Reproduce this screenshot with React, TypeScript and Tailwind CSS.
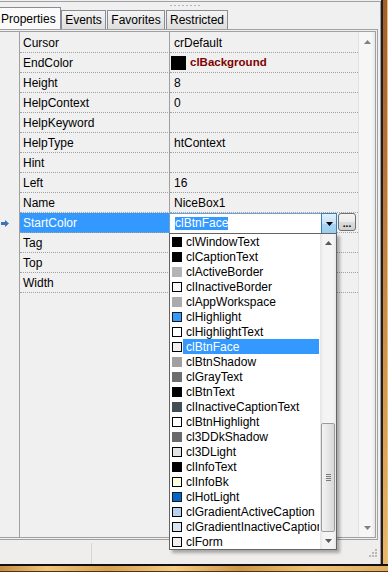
import React from 'react';

type Row = { n: string; v: string; color?: boolean; sel?: boolean };

const rows: Row[] = [
  { n: 'Cursor', v: 'crDefault' },
  { n: 'EndColor', v: 'clBackground', color: true },
  { n: 'Height', v: '8' },
  { n: 'HelpContext', v: '0' },
  { n: 'HelpKeyword', v: '' },
  { n: 'HelpType', v: 'htContext' },
  { n: 'Hint', v: '' },
  { n: 'Left', v: '16' },
  { n: 'Name', v: 'NiceBox1' },
  { n: 'StartColor', v: 'clBtnFace', sel: true },
  { n: 'Tag', v: '' },
  { n: 'Top', v: '' },
  { n: 'Width', v: '' },
];

const items: [string, string, string][] = [
  ['clWindowText', '#000000', '#000000'],
  ['clCaptionText', '#000000', '#000000'],
  ['clActiveBorder', '#b4b4b4', '#b4b4b4'],
  ['clInactiveBorder', '#f4f7fc', '#000000'],
  ['clAppWorkspace', '#ababab', '#ababab'],
  ['clHighlight', '#3399ff', '#1a1a1a'],
  ['clHighlightText', '#ffffff', '#000000'],
  ['clBtnFace', '#f0f0f0', '#000000'],
  ['clBtnShadow', '#a0a0a0', '#a0a0a0'],
  ['clGrayText', '#6d6d6d', '#6d6d6d'],
  ['clBtnText', '#000000', '#000000'],
  ['clInactiveCaptionText', '#434e54', '#434e54'],
  ['clBtnHighlight', '#ffffff', '#000000'],
  ['cl3DDkShadow', '#696969', '#696969'],
  ['cl3DLight', '#e3e3e3', '#000000'],
  ['clInfoText', '#000000', '#000000'],
  ['clInfoBk', '#ffffe1', '#000000'],
  ['clHotLight', '#0066cc', '#1a1a1a'],
  ['clGradientActiveCaption', '#b9d1ea', '#000000'],
  ['clGradientInactiveCaption', '#d7e4f2', '#000000'],
  ['clForm', '#f0f0f0', '#000000'],
];

function Tri({ up, color = '#6a6a6a' }: { up?: boolean; color?: string }) {
  return (
    <svg width="7" height="4" viewBox="0 0 7 4" className="block">
      {up ? <polygon points="0,4 7,4 3.5,0" fill={color} /> : <polygon points="0,0 7,0 3.5,4" fill={color} />}
    </svg>
  );
}

function RowArrow() {
  return (
    <svg width="8" height="7" viewBox="0 0 8 7" className="block">
      <path d="M0 2 H4 V0 L8 3.5 L4 7 V5 H0 Z" fill="#3f72b8" />
    </svg>
  );
}

function DropList() {
  return (
    <div className="absolute left-[-1px] top-[20px] z-10 w-[168px] h-[317px] border border-[#646464] bg-white flex shadow-[3px_3px_3px_rgba(0,0,0,0.3)]">
      <div className="w-[150px] flex flex-col">
        {items.map(([name, fill, bd]) => {
          const sel = name === 'clBtnFace';
          return (
            <div key={name} className="h-[15px] shrink-0 flex items-center">
              <div
                className="ml-[2px] w-[10px] h-[10px] border shrink-0"
                style={{ backgroundColor: fill, borderColor: bd }}
              />
              <div
                className={
                  sel
                    ? 'ml-[1px] mr-[1px] flex-1 h-[15px] flex items-center pl-[3px] bg-[#3399ff] text-white whitespace-nowrap overflow-hidden'
                    : 'ml-[1px] mr-[1px] flex-1 h-[15px] flex items-center pl-[3px] text-black whitespace-nowrap overflow-hidden'
                }
              >
                {name}
              </div>
            </div>
          );
        })}
      </div>
      <div className="w-[16px] flex flex-col bg-[linear-gradient(to_right,#e4e4e4,#f4f4f4_20%,#f4f4f4_80%,#e8e8e8)]">
        <div className="h-[18px] shrink-0 flex items-center justify-center">
          <Tri up color="#5a5a5a" />
        </div>
        <div className="flex-1" />
        <div className="h-[109px] shrink-0 mx-[1px] rounded-[2px] border border-[#9b9b9b] bg-[linear-gradient(to_right,#f3f3f3,#e6e6e6_50%,#d8d8d8)] flex flex-col items-center justify-center gap-[1px]">
          <div className="w-[5px] h-px bg-[#7a7a7a]" />
          <div className="w-[5px] h-px bg-[#7a7a7a]" />
          <div className="w-[5px] h-px bg-[#7a7a7a]" />
          <div className="w-[5px] h-px bg-[#7a7a7a]" />
        </div>
        <div className="h-[17px] shrink-0 flex items-center justify-center">
          <Tri color="#5a5a5a" />
        </div>
      </div>
    </div>
  );
}

function StartColorEditor() {
  return (
    <div className="relative flex items-start h-full">
      <div className="-ml-px w-[168px] h-[21px] border border-[#6d9ed6] bg-white flex">
        <div className="flex-1 flex items-center pl-[5px]">
          <span className="bg-[#3399ff] text-white leading-[13px]">clBtnFace</span>
        </div>
        <div className="-my-px -mr-px w-[16px] h-[21px] border border-[#3c7fb1] bg-[linear-gradient(to_bottom,#e3f1fc,#c4e2f8_50%,#a9d5f3_51%,#9ccdf0)] flex items-center justify-center">
          <Tri color="#000000" />
        </div>
      </div>
      <div className="ml-px w-[18px] h-[18px] rounded-[3px] border border-[#707070] bg-[linear-gradient(to_bottom,#f4f4f4,#ebebeb_50%,#dcdcdc_51%,#d0d0d0)] flex items-end justify-center pb-[1px] text-[10px] leading-[10px] font-bold">
        ...
      </div>
      <DropList />
    </div>
  );
}

export default function App() {
  return (
    <div className="w-[388px] h-[572px] flex flex-col bg-[#f0f0f0] overflow-hidden font-['Liberation_Sans',Arial,sans-serif] text-[12px] text-black leading-none">
      <div className="flex h-[564px]">
        <div className="w-[381px] flex flex-col pt-px">
          <div className="flex-1 flex flex-col border-t border-r border-[#a0a0a0]">
            {/* grip */}
            <div className="h-[5px] shrink-0 flex items-end pl-[170px] pb-px gap-[2px]">
              {Array.from({ length: 8 }).map((_, i) => (
                <div key={i} className="w-[2px] h-[1px] bg-[#b5b5b5]" />
              ))}
            </div>
            {/* tabs */}
            <div className="h-[22px] shrink-0 flex items-end">
              <div className="w-[61px] h-[22px] border-t border-r border-[#898c95] bg-[#fafafa] flex items-center pl-px">
                Properties
              </div>
              <div className="w-[45px] h-[19px] border-t border-l border-r border-[#898c95] bg-[linear-gradient(to_bottom,#f4f4f4,#e9e9e9_50%,#dedede)] flex items-center justify-center">
                Events
              </div>
              <div className="ml-px w-[58px] h-[19px] border-t border-l border-r border-[#898c95] bg-[linear-gradient(to_bottom,#f4f4f4,#e9e9e9_50%,#dedede)] flex items-center justify-center">
                Favorites
              </div>
              <div className="ml-px w-[62px] h-[19px] border-t border-l border-r border-[#898c95] bg-[linear-gradient(to_bottom,#f4f4f4,#e9e9e9_50%,#dedede)] flex items-center justify-center">
                Restricted
              </div>
            </div>
            {/* grid panel */}
            <div className="mr-[2px] h-[511px] shrink-0 border-t-[3px] border-r-[3px] border-b-[3px] border-double border-[#a0a0a0] flex">
              <div className="flex-1 flex flex-col">
                {rows.map((r, i) => (
                  <div key={r.n} className={i === 0 ? 'flex shrink-0 h-[21px]' : 'flex shrink-0 h-[20px]'}>
                    <div className="w-[20px] shrink-0 border-r border-[#a0a0a0] flex items-center pl-px">
                      {r.sel && <RowArrow />}
                    </div>
                    <div
                      className={
                        (r.sel
                          ? 'bg-[#3399ff] text-white '
                          : '') +
                        (i === 0 ? 'pt-px ' : '') +
                        'w-[150px] shrink-0 border-r border-b border-[#a0a0a0] [border-bottom-style:dotted] flex items-center pl-[3px] whitespace-nowrap'
                      }
                    >
                      {r.n}
                    </div>
                    <div
                      className={
                        (i === 0 ? 'pt-px ' : '') +
                        'flex-1 border-b border-[#a0a0a0] [border-bottom-style:dotted] whitespace-nowrap ' +
                        (r.sel ? 'relative' : 'flex items-center')
                      }
                    >
                      {r.sel ? (
                        <StartColorEditor />
                      ) : r.color ? (
                        <>
                          <div className="ml-px w-[15px] h-[14px] bg-black" />
                          <span className="ml-[4px] font-bold text-[#800000] text-[11.5px]">{r.v}</span>
                        </>
                      ) : (
                        <span className="pl-[4px]">{r.v}</span>
                      )}
                    </div>
                  </div>
                ))}
                <div className="flex-1 flex">
                  <div className="w-[20px] border-r border-[#a0a0a0]" />
                  <div className="w-[150px] border-r border-[#a0a0a0]" />
                </div>
              </div>
              <div className="w-[17px] flex flex-col border-l border-[#e0e0e0] bg-[linear-gradient(to_right,#f6f6f6,#f6f6f6_80%,#e6e6e6)]">
                <div className="h-[20px] shrink-0 flex items-center justify-center">
                  <Tri up color="#808080" />
                </div>
                <div className="flex-1" />
                <div className="h-[18px] shrink-0 flex items-center justify-center">
                  <Tri color="#808080" />
                </div>
              </div>
            </div>
            {/* status bar */}
            <div className="flex-1 flex pt-[3px] bg-[#f0eeed] relative">
              <div className="w-[92px] border-r border-[#d7d5d4]" />
              <div className="absolute right-[3px] bottom-[7px] grid grid-cols-3 gap-[1px]">
                <div className="w-[2px] h-[2px]" />
                <div className="w-[2px] h-[2px]" />
                <div className="w-[2px] h-[2px] bg-[#b8b8b8]" />
                <div className="w-[2px] h-[2px]" />
                <div className="w-[2px] h-[2px] bg-[#b8b8b8]" />
                <div className="w-[2px] h-[2px] bg-[#b8b8b8]" />
                <div className="w-[2px] h-[2px] bg-[#b8b8b8]" />
                <div className="w-[2px] h-[2px] bg-[#b8b8b8]" />
                <div className="w-[2px] h-[2px] bg-[#b8b8b8]" />
              </div>
            </div>
          </div>
        </div>
        {/* right window frame */}
        <div className="w-[7px] border-l-2 border-l-[#1e1e1e] border-r border-r-[#e2c08a] bg-[linear-gradient(to_bottom,#a35e2b,#b8733a_30%,#d8994d_70%,#ebb767)]" />
      </div>
      {/* bottom window frame */}
      <div className="h-[8px] shrink-0 border-t-2 border-t-[#111] border-b border-b-[#4a3518] bg-[linear-gradient(to_right,#c58c40,#f2c477_12%,#d8a052_28%,#f7ca82_45%,#cf9448_62%,#f1c273_80%,#e0ad62)]" />
    </div>
  );
}
